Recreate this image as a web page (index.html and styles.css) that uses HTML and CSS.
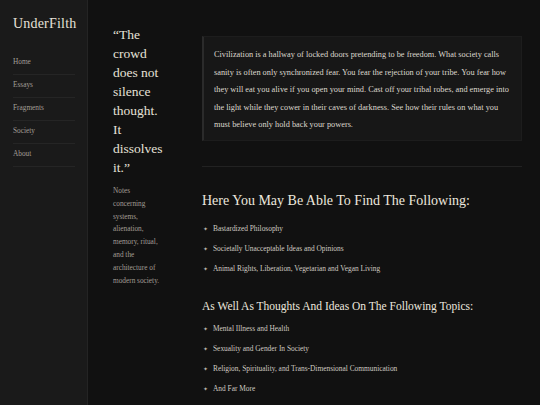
FILE: index.html
```html
<!DOCTYPE html>
<html lang="en">
<head>
    <meta charset="UTF-8">
    <meta name="viewport" content="width=device-width, initial-scale=1.0">
    <title>UnderFilth</title>
    <link rel="stylesheet" href="styles.css">
</head>
<body>
    <div class="page">
        <nav class="sidebar">
            <div class="logo">UnderFilth</div>
            <ul class="nav">
                <li><a href="#">Home</a></li>
                <li><a href="#">Essays</a></li>
                <li><a href="#">Fragments</a></li>
                <li><a href="#">Society</a></li>
                <li><a href="#">About</a></li>
            </ul>
        </nav>

        <aside class="aside">
            <p class="quote">&ldquo;The crowd does not silence thought. It dissolves it.&rdquo;</p>
            <p class="notes">Notes concerning systems, alienation, memory, ritual, and the architecture of modern society.</p>
        </aside>

        <main class="main">
            <blockquote class="intro">
                Civilization is a hallway of locked doors pretending to be freedom. What society calls sanity is often only synchronized fear. You fear the rejection of your tribe. You fear how they will eat you alive if you open your mind. Cast off your tribal robes, and emerge into the light while they cower in their caves of darkness. See how their rules on what you must believe only hold back your powers.
            </blockquote>

            <hr class="divider">

            <h2>Here You May Be Able To Find The Following:</h2>
            <ul class="list">
                <li>Bastardized Philosophy</li>
                <li>Societally Unacceptable Ideas and Opinions</li>
                <li>Animal Rights, Liberation, Vegetarian and Vegan Living</li>
            </ul>

            <h3>As Well As Thoughts And Ideas On The Following Topics:</h3>
            <ul class="list">
                <li>Mental Illness and Health</li>
                <li>Sexuality and Gender In Society</li>
                <li>Religion, Spirituality, and Trans-Dimensional Communication</li>
                <li>And Far More</li>
            </ul>
        </main>
    </div>
</body>
</html>
```

FILE: styles.css
```css
body {
    margin: 0;
    background-color: #111111;
    color: #e2ddd3;
    font-family: "Liberation Serif", "Times New Roman", serif;
}
.page {
    display: grid;
    grid-template-columns: 88px 92px 1fr;
    min-height: 100vh;
}
.sidebar {
    background-color: #1a1a1a;
    border-right: 1px solid #242424;
    padding: 15px 12px 0 13px;
}
.logo {
    font-size: 14px;
    line-height: 18px;
    letter-spacing: 0.2px;
    color: #e6e1d8;
    margin-bottom: 19px;
}
.nav {
    list-style: none;
    margin: 0;
    padding: 0;
}
.nav li {
    border-bottom: 1px solid #252525;
    padding: 5px 0 7px;
    font-size: 7.3px;
    line-height: 10px;
}
.nav a {
    color: #a29e97;
    text-decoration: none;
}
.aside {
    padding: 25px 19px 0 25px;
}
.quote {
    margin: 0 0 8px;
    font-size: 13.5px;
    line-height: 19px;
    color: #e6e1d8;
}
.notes {
    margin: 0;
    font-size: 7.3px;
    line-height: 12.8px;
    color: #a29d95;
}
.main {
    padding: 36px 18px 0 22px;
}
.intro {
    margin: 0;
    background-color: #171717;
    border: 1px solid #1d1d1d;
    border-left: 2px solid #2b2b2b;
    padding: 9px 10px 6px 10px;
    font-size: 8.3px;
    line-height: 17.5px;
    color: #ddd8ce;
}
.divider {
    border: none;
    border-top: 1px solid #222222;
    margin: 25px 0 26px;
}
h2 {
    font-weight: normal;
    font-size: 14px;
    margin: 0 0 10px;
    color: #ece7de;
}
h3 {
    font-weight: normal;
    font-size: 11.5px;
    margin: 21px 0 7px;
    color: #ece7de;
}
.list {
    list-style: none;
    margin: 0;
    padding: 0;
}
.list li {
    font-size: 7.4px;
    line-height: 20px;
    color: #cfcac1;
    padding-left: 11px;
    position: relative;
}
.list li::before {
    content: "\2726";
    position: absolute;
    left: 1px;
    font-size: 6px;
    color: #b9b4aa;
}
```
